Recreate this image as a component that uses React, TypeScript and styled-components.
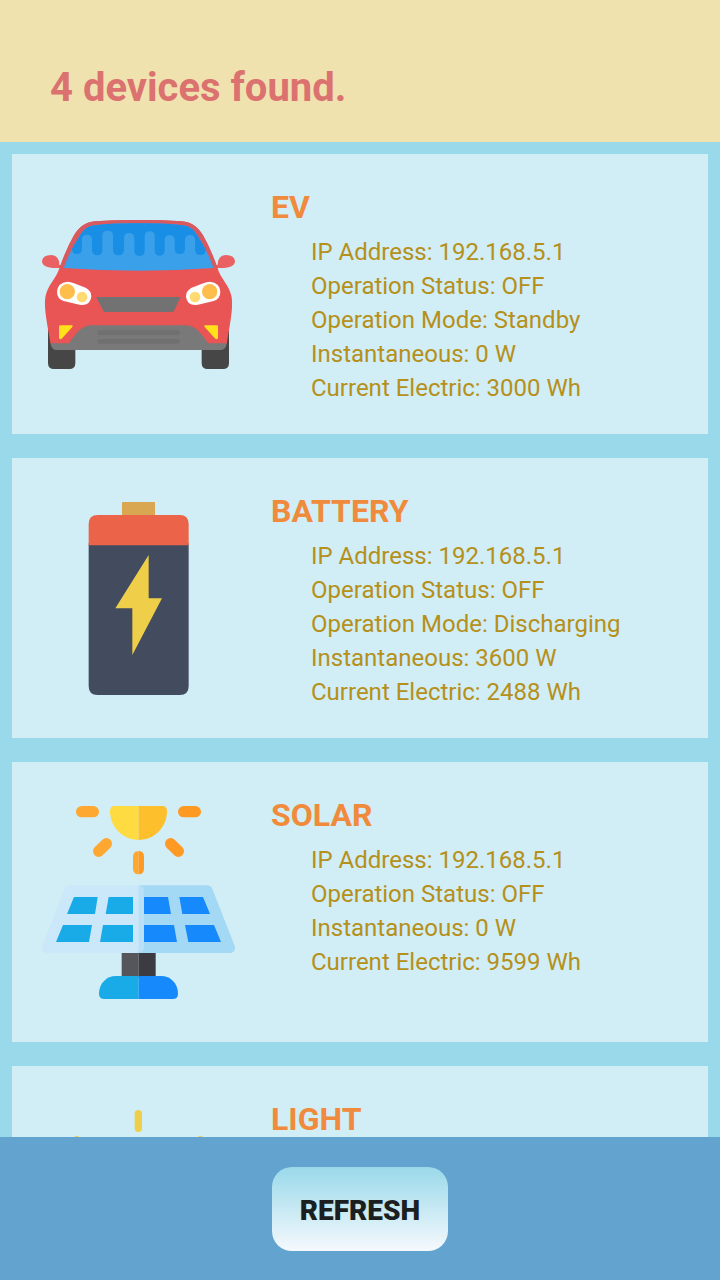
import React from "react";
import styled, { createGlobalStyle } from "styled-components";

const GlobalStyle = createGlobalStyle`
  *, *::before, *::after { box-sizing: border-box; }
  html, body, #root { height: 100%; }
  body {
    margin: 0;
    background: #9ad9ea;
    font-family: Roboto, "Liberation Sans", sans-serif;
  }
  h1, h2, ul { margin: 0; padding: 0; }
`;

const Screen = styled.div`
  display: flex;
  flex-direction: column;
  height: 100vh;
`;

const Header = styled.header`
  flex: none;
  padding: 64px 50px 30px;
  background: #efe2af;
`;

const Title = styled.h1`
  font-size: 40px;
  line-height: 48px;
  font-weight: 700;
  color: #db7270;
`;

const DeviceList = styled.ul`
  flex: 1;
  min-height: 0;
  overflow-y: auto;
  scrollbar-width: none;
  display: flex;
  flex-direction: column;
  gap: 24px;
  padding: 12px;
  list-style: none;
`;

const Card = styled.li`
  flex: none;
  display: flex;
  gap: 36px;
  min-height: 280px;
  padding: 0 30px;
  background: #d1edf5;
`;

const IconFrame = styled.div`
  flex: none;
  width: 193px;
  padding-top: 44px;

  svg {
    display: block;
    width: 100%;
  }
`;

const Info = styled.div`
  flex: 1;
  min-width: 0;
  padding: 32px 0 24px;
`;

const DeviceName = styled.h2`
  margin-bottom: 7px;
  font-size: 32px;
  line-height: 42px;
  font-weight: 700;
  color: #f08a3c;
`;

const Details = styled.ul`
  padding-left: 40px;
  list-style: none;
  font-size: 24px;
  line-height: 34px;
  color: #b5901a;
`;

const Footer = styled.footer`
  flex: none;
  display: flex;
  justify-content: center;
  padding: 30px 12px 29px;
  background: #62a4cf;
`;

const RefreshButton = styled.button`
  height: 84px;
  padding: 4px 28px 0;
  border: 0;
  border-radius: 20px;
  background: linear-gradient(#9ad9ea, #f5f9fd);
  font-family: inherit;
  font-size: 28px;
  line-height: 34px;
  font-weight: 900;
  color: #1b1f20;
  cursor: pointer;
`;

const CarIcon = () => (
  <svg viewBox="36 -21 579 579" aria-hidden="true">
    <path d="M54 360H136V474Q136 492 118 492H72Q54 492 54 474ZM515 360H597V474Q597 492 579 492H533Q515 492 515 474Z" fill="#464646" />
    <path d="M36 168Q38 150 64 150Q88 151 88 180H98V189H82Q36 190 36 168ZM615 168Q613 150 587 150Q563 151 563 180H553V189H569Q615 190 615 168Z" fill="#e96163" />
    <path d="M326 45Q400 45 455 49C484 51 503 65 519 91Q545 136 563 190C570 219 599 241 605 277C610 312 599 361 590 418H62C53 361 41 312 46 277C52 241 80 219 88 190Q106 136 132 91C148 65 167 51 196 49Q251 45 326 45Z" fill="#e95454" />
    <path d="M326 45Q400 45 455 49C484 51 503 65 519 91Q542 132 561 188H553L500 82L450 56H200L152 82L100 188H91Q109 132 132 91C148 65 167 51 196 49Q251 45 326 45Z" fill="#d65a60" />
    <path d="M326 55Q395 55 445 59C479 61 492 72 505 96Q533 139 551 189Q440 197 326 197Q212 197 101 189Q119 139 147 96C160 72 173 61 207 59Q257 55 326 55Z" fill="#3ba0ea" />
    <path d="M326 55Q395 55 445 59C479 61 492 72 505 96Q517 114 527 134Q527 150 511 150Q495 150 495 134V105Q495 90 480 90Q465 90 465 105V131Q465 147 449 147Q434 147 434 131V105Q434 91 419 91Q404 91 404 105V136Q404 152 389 152Q374 152 374 136V94Q374 79 359 79Q344 79 344 94V137Q344 153 329 153Q313 153 313 137V99Q313 84 297 84Q282 84 282 99V135Q282 151 266 151Q249 151 249 135V92Q249 77 233 77Q217 77 217 92V135Q217 151 202 151Q186 151 186 135V104Q186 89 171 89Q156 89 156 104V131Q156 147 141 147Q126 147 126 132Q136 113 147 96C160 72 173 61 207 59Q257 55 326 55Z" fill="#188ee5" />
    <path d="M199 276H452L430 321H222Z" fill="#727272" />
    <path d="M62 415H117C138 385 153 361 187 361H464C498 361 513 385 534 415H590Q588 435 573 435H78Q64 435 62 415Z" fill="#797979" />
    <path d="M209 383H443M209 409H443" stroke="#707070" strokeWidth="14" strokeLinecap="round" />
    <path d="M112 230Q122 230 132 235L167 248Q184 257 184 275Q181 300 156 300L148 299L101 288Q81 281 81 260Q83 233 112 230ZM540 230Q530 230 520 235L485 248Q468 257 468 275Q471 300 496 300L504 299L551 288Q571 281 571 260Q569 233 540 230Z" fill="#fff" />
    <circle cx="112" cy="260" r="23" fill="#ffbe4c" />
    <circle cx="539" cy="260" r="23" fill="#ffbe4c" />
    <circle cx="156" cy="276" r="16" fill="#ffda70" />
    <circle cx="495" cy="276" r="16" fill="#ffda70" />
    <path d="M91 361H126Q130 362 127 366L95 401Q88 405 87 398V365Q87 361 91 361ZM560 361H525Q521 362 524 366L556 401Q563 405 564 398V365Q564 361 560 361Z" fill="#ffe01a" />
  </svg>
);

const BatteryIcon = () => (
  <svg viewBox="-84 36 579 579" aria-hidden="true">
    <path d="M156 36H255V80H156Z" fill="#d9a752" />
    <path d="M56 160H356V588Q356 615 329 615H83Q56 615 56 588Z" fill="#434b5f" />
    <path d="M83 75H329Q356 75 356 102V166H56V102Q56 75 83 75Z" fill="#eb6449" />
    <path d="M236 195V325H276L187 495V355H136Z" fill="#efcf49" />
  </svg>
);

const SolarIcon = () => (
  <svg viewBox="36 33 579 579" aria-hidden="true">
    <path d="M254 33H326V135C279 135 240 97 240 49Q240 33 254 33Z" fill="#fedb41" />
    <path d="M326 33H397Q411 33 411 49C411 97 373 135 326 135Z" fill="#fdbf2c" />
    <g strokeWidth="34" strokeLinecap="round">
      <path d="M155 50H190M206 169L229 146" stroke="#fea832" />
      <path d="M461 50H496M445 169L422 146" stroke="#fe9923" />
    </g>
    <path d="M326 168V238Q309 237 309 221V185Q309 169 326 168Z" fill="#fea832" />
    <path d="M326 168Q342 169 342 185V221Q342 237 326 238Z" fill="#fe9923" />
    <path d="M275 470H326V548H275Z" fill="#57555c" />
    <path d="M326 470H377V548H326Z" fill="#3c3b41" />
    <path d="M326 543V612H223Q207 612 207 596C207 565 230 543 258 543Z" fill="#19abe7" />
    <path d="M326 543H393C421 543 444 565 444 596Q444 612 428 612H326Z" fill="#1689fc" />
    <path d="M326 271H531Q542 271 547 282L614 452Q619 474 598 474H326Z" fill="#a4d9f6" />
    <path d="M326 271H120Q109 271 104 282L37 452Q32 474 53 474H326Z" fill="#cae8fa" />
    <path d="M326 271Q342 274 342 289V456Q342 471 326 474Z" fill="#b9e0f6" />
    <path d="M132 306H203L195 357H111ZM236 306H309V357H227ZM99 390H186L177 441H78ZM219 390H309V441H210Z" fill="#19abe7" />
    <path d="M342 306H414L423 357H342ZM448 306H519L540 357H457ZM342 390H432L441 441H342ZM465 390H552L573 441H475Z" fill="#1689fc" />
  </svg>
);

const LightIcon = () => (
  <svg viewBox="36 180 579 579" aria-hidden="true">
    <path
      d="M325 191V235M140 269L171 300M511 269L480 300M58 455H102M593 455H549"
      stroke="#efcf49"
      strokeWidth="22"
      strokeLinecap="round"
    />
    <path d="M325 290C230 290 160 360 160 450C160 530 230 570 245 650H405C420 570 490 530 490 450C490 360 420 290 325 290Z" fill="#efcf49" />
    <path d="M250 650H400V720Q400 759 361 759H289Q250 759 250 720Z" fill="#434b5f" />
  </svg>
);

interface Device {
  name: string;
  Icon: React.ComponentType;
  details: [string, string][];
}

const devices: Device[] = [
  {
    name: "EV",
    Icon: CarIcon,
    details: [
      ["IP Address", "192.168.5.1"],
      ["Operation Status", "OFF"],
      ["Operation Mode", "Standby"],
      ["Instantaneous", "0 W"],
      ["Current Electric", "3000 Wh"],
    ],
  },
  {
    name: "BATTERY",
    Icon: BatteryIcon,
    details: [
      ["IP Address", "192.168.5.1"],
      ["Operation Status", "OFF"],
      ["Operation Mode", "Discharging"],
      ["Instantaneous", "3600 W"],
      ["Current Electric", "2488 Wh"],
    ],
  },
  {
    name: "SOLAR",
    Icon: SolarIcon,
    details: [
      ["IP Address", "192.168.5.1"],
      ["Operation Status", "OFF"],
      ["Instantaneous", "0 W"],
      ["Current Electric", "9599 Wh"],
    ],
  },
  {
    name: "LIGHT",
    Icon: LightIcon,
    details: [],
  },
];

export default function App() {
  return (
    <>
      <GlobalStyle />
      <Screen>
        <Header>
          <Title>{`${devices.length} devices found.`}</Title>
        </Header>
        <DeviceList>
          {devices.map(({ name, Icon, details }) => (
            <Card key={name}>
              <IconFrame>
                <Icon />
              </IconFrame>
              <Info>
                <DeviceName>{name}</DeviceName>
                <Details>
                  {details.map(([label, value]) => (
                    <li key={label}>{`${label}: ${value}`}</li>
                  ))}
                </Details>
              </Info>
            </Card>
          ))}
        </DeviceList>
        <Footer>
          <RefreshButton type="button">REFRESH</RefreshButton>
        </Footer>
      </Screen>
    </>
  );
}
